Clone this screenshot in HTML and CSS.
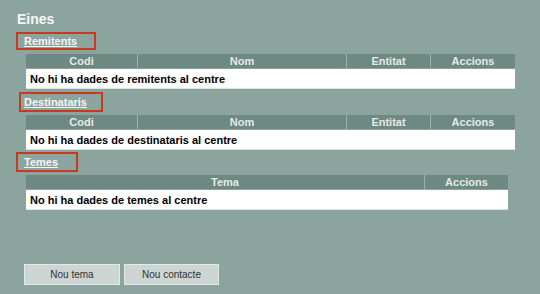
FILE: index.html
```html
<!DOCTYPE html>
<html lang="ca">
<head>
    <meta charset="UTF-8">
    <meta name="viewport" content="width=device-width, initial-scale=1.0">
    <title>Eines</title>
    <link rel="stylesheet" href="styles.css">
</head>
<body>
    <div class="page">
        <h1>Eines</h1>

        <div class="section-title first">
            <span class="mark mark-remitents"><a href="#">Remitents</a></span>
        </div>
        <table class="list">
            <thead>
                <tr>
                    <th class="col-codi">Codi</th>
                    <th class="col-nom">Nom</th>
                    <th class="col-entitat">Entitat</th>
                    <th class="col-accions">Accions</th>
                </tr>
            </thead>
            <tbody>
                <tr>
                    <td colspan="4">No hi ha dades de remitents al centre</td>
                </tr>
            </tbody>
        </table>

        <div class="section-title">
            <span class="mark mark-destinataris"><a href="#">Destinataris</a></span>
        </div>
        <table class="list">
            <thead>
                <tr>
                    <th class="col-codi">Codi</th>
                    <th class="col-nom">Nom</th>
                    <th class="col-entitat">Entitat</th>
                    <th class="col-accions">Accions</th>
                </tr>
            </thead>
            <tbody>
                <tr>
                    <td colspan="4">No hi ha dades de destinataris al centre</td>
                </tr>
            </tbody>
        </table>

        <div class="section-title last">
            <span class="mark mark-temes"><a href="#">Temes</a></span>
        </div>
        <table class="list list-temes">
            <thead>
                <tr>
                    <th class="col-tema">Tema</th>
                    <th class="col-accions">Accions</th>
                </tr>
            </thead>
            <tbody>
                <tr>
                    <td colspan="2">No hi ha dades de temes al centre</td>
                </tr>
            </tbody>
        </table>

        <div class="buttons">
            <button type="button" class="btn btn-tema">Nou tema</button>
            <button type="button" class="btn btn-contacte">Nou contacte</button>
        </div>
    </div>
</body>
</html>
```

FILE: styles.css
```css
body {
    margin: 0;
    padding: 0;
    background-color: #8ca49e;
    font-family: "Liberation Sans", Arial, sans-serif;
    color: #000;
}
.page {
    padding-top: 11px;
}
h1 {
    margin: 0 0 0 17px;
    font-size: 14px;
    line-height: 16px;
    font-weight: bold;
    color: #f6f8f7;
}

/* section links with the red highlight */
.section-title {
    margin-top: 3px;
    margin-bottom: 3px;
}
.section-title.first {
    margin-top: 5px;
    margin-bottom: 4px;
}
.section-title.last {
    margin-top: 2px;
}
.mark {
    display: inline-block;
    border: 2px solid #c9391d;
    font-size: 11px;
    line-height: 16px;
    vertical-align: top;
}
.mark a {
    color: #f4f6f5;
    font-weight: bold;
    text-decoration: underline;
}
.mark-remitents {
    margin-left: 16px;
    padding: 0 17px 0 6px;
    line-height: 14px;
}
.mark-destinataris {
    margin-left: 19px;
    padding: 0 14px 0 3px;
}
.mark-temes {
    margin-left: 16px;
    padding: 0 18px 0 6px;
}

/* tables */
.list {
    width: 489px;
    margin-left: 26px;
    border-collapse: separate;
    border-spacing: 0;
    table-layout: fixed;
    font-size: 11px;
}
.list-temes {
    width: 482px;
}
.list th {
    box-sizing: border-box;
    height: 14px;
    padding: 0;
    line-height: 14px;
    background-color: #6e8882;
    color: #e4eae8;
    font-weight: bold;
    text-align: center;
    border-bottom: 1px solid #8ca49e;
}
.list th + th {
    border-left: 1px solid #9db0ab;
}
.col-codi { width: 111px; }
.col-nom { width: 209px; }
.col-entitat { width: 84px; }
.col-accions { width: 85px; }
.col-tema { width: 398px; }
.list-temes .col-accions { width: 84px; }

.list td {
    padding: 1px 4px 0 4px;
    line-height: 18px;
    background-color: #fff;
    font-weight: bold;
    border-bottom: 1px solid #dde4e2;
}

/* buttons */
.buttons {
    display: flex;
    gap: 4px;
    margin-top: 54px;
    padding-left: 24px;
}
.btn {
    height: 21px;
    padding: 0;
    background-color: #ccd5d2;
    border: 1px solid #e3e9e7;
    font-family: "Liberation Sans", Arial, sans-serif;
    font-size: 10px;
    color: #2f3332;
    cursor: pointer;
}
.btn-tema { width: 96px; }
.btn-contacte { width: 95px; }
```
